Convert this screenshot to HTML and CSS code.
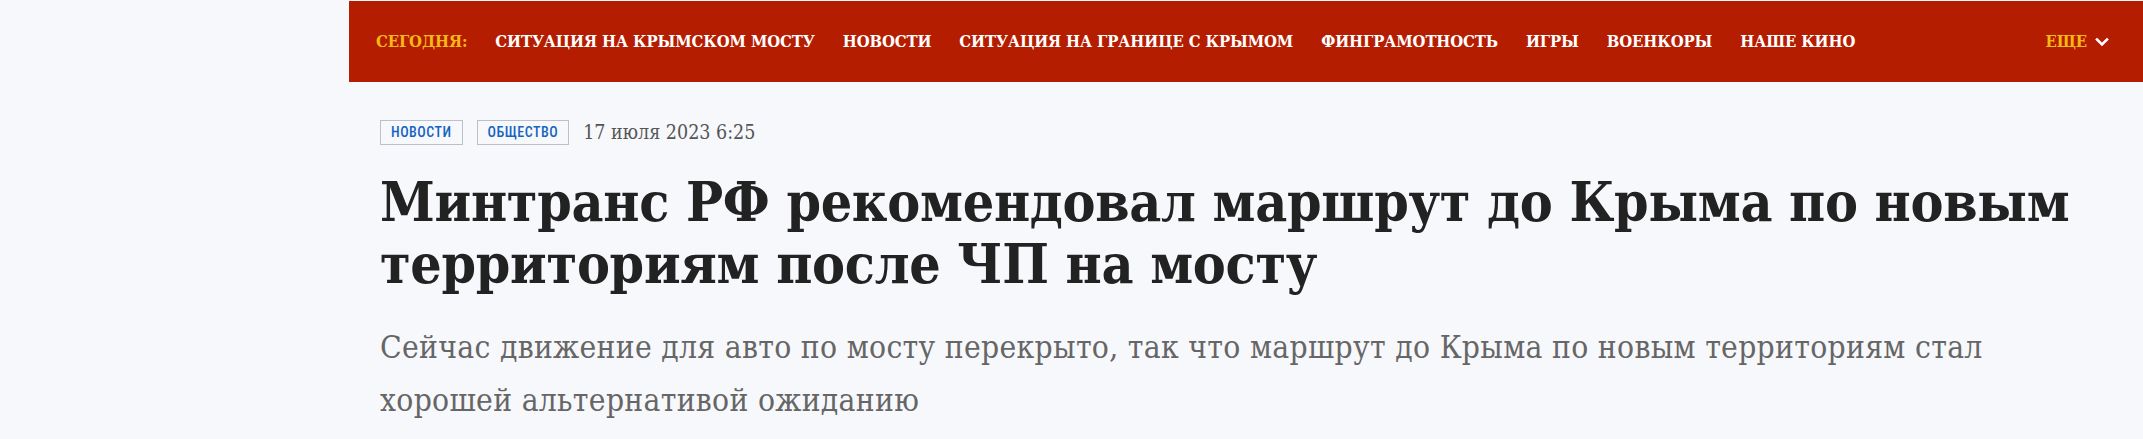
FILE: index.html
```html
<!DOCTYPE html>
<html lang="ru">
<head>
    <meta charset="UTF-8">
    <meta name="viewport" content="width=device-width, initial-scale=1.0">
    <title>Минтранс РФ рекомендовал маршрут до Крыма по новым территориям после ЧП на мосту</title>
    <link rel="stylesheet" href="styles.css">
</head>
<body>
    <div class="page">
        <aside class="side"></aside>

        <main class="main">
            <!-- Topics of the day -->
            <nav class="topbar">
                <span class="today">Сегодня:</span>
                <a href="#">Ситуация на Крымском мосту</a>
                <a href="#">Новости</a>
                <a href="#">Ситуация на границе с Крымом</a>
                <a href="#">Финграмотность</a>
                <a href="#">Игры</a>
                <a href="#">Военкоры</a>
                <a href="#">Наше кино</a>
                <span class="more">
                    Еще
                    <svg width="14" height="10" viewBox="0 0 14 10">
                        <path d="M2 2.5 L7 7.5 L12 2.5" fill="none" stroke="#fff" stroke-width="2.6" stroke-linecap="square"/>
                    </svg>
                </span>
            </nav>

            <article class="article">
                <div class="meta">
                    <a class="tag" href="#">Новости</a>
                    <a class="tag" href="#">Общество</a>
                    <time class="date">17 июля 2023 6:25</time>
                </div>
                <h1 class="title">Минтранс РФ рекомендовал маршрут до Крыма по новым территориям после ЧП на мосту</h1>
                <p class="lead">Сейчас движение для авто по мосту перекрыто, так что маршрут до Крыма по новым территориям стал хорошей альтернативой ожиданию</p>
            </article>
        </main>
    </div>
</body>
</html>
```

FILE: styles.css
```css
body {
    margin: 0;
    background: #f7f8fc;
    font-family: "DejaVu Serif Condensed", "DejaVu Serif", "Liberation Serif", serif;
    font-stretch: condensed;
}
.page {
    display: grid;
    grid-template-columns: 349px 1fr;
    padding-top: 1px;
}
.topbar {
    display: flex;
    align-items: center;
    gap: 28px;
    height: 81px;
    padding: 0 34px 0 27px;
    background: #b51d00;
    font-size: 16.5px;
    font-weight: bold;
    text-transform: uppercase;
    letter-spacing: -0.1px;
}
.topbar a {
    color: #fff;
    text-decoration: none;
    white-space: nowrap;
}
.today {
    color: #f5b916;
}
.more {
    margin-left: auto;
    display: flex;
    align-items: center;
    gap: 8px;
    color: #f5b916;
}
.article {
    padding: 38px 65px 0 31px;
}
.meta {
    display: flex;
    align-items: center;
    gap: 14px;
}
.tag {
    display: block;
    border: 1px solid #bcc0c8;
    padding: 0 10px;
    height: 23px;
    line-height: 23px;
    font-family: Roboto, "Liberation Sans", sans-serif;
    font-size: 14px;
    font-weight: 500;
    letter-spacing: 0.5px;
    color: #1565c0;
    text-transform: uppercase;
    text-decoration: none;
}
.date {
    font-size: 19.5px;
    color: #555;
}
.title {
    margin: 26px 0 0;
    font-size: 55px;
    line-height: 62px;
    font-weight: bold;
    color: #222;
    letter-spacing: -0.3px;
}
.lead {
    margin: 26px 0 0;
    font-size: 31.5px;
    line-height: 53px;
    letter-spacing: 0.3px;
    color: #666;
}
```
